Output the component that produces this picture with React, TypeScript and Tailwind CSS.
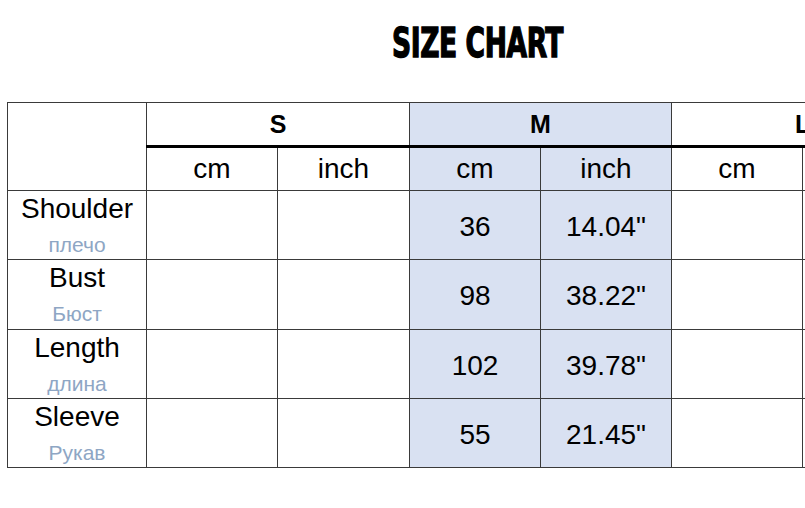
import React from 'react';

const rows = [
  { en: 'Shoulder', ru: 'плечо', cm: '36', inch: '14.04"', h: 'h-[69px]' },
  { en: 'Bust', ru: 'Бюст', cm: '98', inch: '38.22"', h: 'h-[70px]' },
  { en: 'Length', ru: 'длина', cm: '102', inch: '39.78"', h: 'h-[69px]' },
  { en: 'Sleeve', ru: 'Рукав', cm: '55', inch: '21.45"', h: 'h-[69px]' },
];

const cell = 'border border-[#3a3a3a] p-0 text-center align-middle';
const blue = 'bg-[#d9e1f2]';

export default function App() {
  return (
    <div className="w-[805px] h-[508px] overflow-hidden bg-white text-black" style={{ fontFamily: '"Liberation Sans", Arial, sans-serif' }}>
      <div className="h-[102px] pl-[392px] pt-[24px]">
        <h1
          className="text-[36px] leading-[40px] font-bold tracking-[-0.5px] origin-left scale-x-[0.82] scale-y-[1.12] whitespace-nowrap [-webkit-text-stroke:1.2px_black]"
          style={{ fontFamily: '"DejaVu Sans Condensed", "DejaVu Sans", sans-serif' }}
        >
          SIZE CHART
        </h1>
      </div>
      <div className="pl-[7px]">
        <table className="border-collapse table-fixed w-[926px] leading-none">
          <colgroup>
            <col className="w-[139px]" />
            <col className="w-[131px]" />
            <col className="w-[132px]" />
            <col className="w-[131px]" />
            <col className="w-[131px]" />
            <col className="w-[131px]" />
            <col className="w-[131px]" />
          </colgroup>
          <tbody>
            <tr className="h-[44px] text-[25px]">
              <td rowSpan={2} className={cell}></td>
              <td colSpan={2} className={`${cell} font-bold border-b-[3px] border-b-black`}>S</td>
              <td colSpan={2} className={`${cell} ${blue} font-bold border-b-[3px] border-b-black`}>M</td>
              <td colSpan={2} className={`${cell} font-bold border-b-[3px] border-b-black`}>L</td>
            </tr>
            <tr className="h-[44px] text-[28px]">
              <td className={cell}>cm</td>
              <td className={cell}>inch</td>
              <td className={`${cell} ${blue}`}>cm</td>
              <td className={`${cell} ${blue}`}>inch</td>
              <td className={cell}>cm</td>
              <td className={cell}>inch</td>
            </tr>
            {rows.map((r) => (
              <tr key={r.en} className={`${r.h} text-[28px]`}>
                <td className={`${cell} align-top pt-[4px]`}>
                  <div className="text-[28px] leading-[28px]">{r.en}</div>
                  <div className="text-[21px] leading-[22px] mt-[11px] text-[#8ea6c4]">{r.ru}</div>
                </td>
                <td className={cell}></td>
                <td className={cell}></td>
                <td className={`${cell} ${blue} pt-[3px]`}>{r.cm}</td>
                <td className={`${cell} ${blue} pt-[3px]`}>{r.inch}</td>
                <td className={cell}></td>
                <td className={cell}></td>
              </tr>
            ))}
          </tbody>
        </table>
      </div>
    </div>
  );
}
